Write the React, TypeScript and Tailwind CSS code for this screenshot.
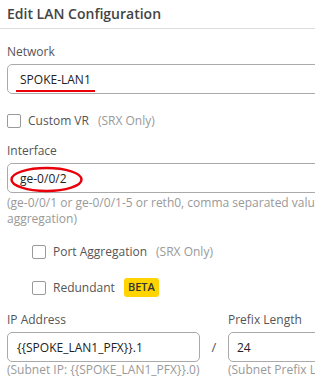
const FONT = "font-['Open_Sans',_'Noto_Sans',_sans-serif]";

function Checkbox() {
  return <span className="block h-[14px] w-[14px] shrink-0 rounded-[2px] border border-[#9a9a9a] bg-white" />;
}

function CheckRow({ label, note, badge, indent }: { label: string; note?: string; badge?: string; indent?: boolean }) {
  return (
    <div className={`flex items-center ${indent ? 'ml-[25px]' : ''}`}>
      <Checkbox />
      <span className="ml-[7px] text-[12px] leading-[16px] text-[#555]">{label}</span>
      {note && <span className="ml-[9px] text-[12px] leading-[16px] text-[#999]">{note}</span>}
      {badge && (
        <span className="ml-[9px] flex h-[19px] w-[35px] items-center justify-center rounded-[3px] bg-[#ffd400] text-[11px] font-semibold text-[#333]">
          {badge}
        </span>
      )}
    </div>
  );
}

export default function App() {
  return (
    <div className={`h-[390px] w-[315px] overflow-hidden bg-white ${FONT}`}>
      <div className="h-[29px] border-b border-[#dcdcdc] px-[7px] pt-[4px]">
        <h2 className="whitespace-nowrap text-[14px] font-semibold leading-[20px] text-[#444]">Edit LAN Configuration</h2>
      </div>

      <div className="w-[420px] pl-[7px]">
        {/* Network */}
        <div className="mt-[15px] text-[12px] leading-[16px] text-[#555]">Network</div>
        <div className="relative mt-[4px] h-[30px] rounded-[5px] border border-[#aaa] pl-[12px] pt-[1px] text-[12px] leading-[28px] text-[#222]">
          SPOKE-LAN1
          <span className="absolute left-[8px] top-[25px] h-[2px] w-[79px] bg-[#e8000b]" />
        </div>

        <div className="mt-[19px]">
          <CheckRow label="Custom VR" note="(SRX Only)" />
        </div>

        {/* Interface */}
        <div className="mt-[14px] text-[12px] leading-[16px] text-[#555]">Interface</div>
        <div className="relative mt-[4px] h-[30px] rounded-[5px] border border-[#aaa] pl-[12px] pt-[1px] text-[12px] leading-[28px] text-[#222]">
          ge-0/0/2
          <svg className="absolute left-[1px] top-[2px]" width="76" height="28" viewBox="0 0 76 28">
            <ellipse cx="37.5" cy="13.5" rx="35" ry="11.5" fill="none" stroke="#e8000b" strokeWidth="2.5" />
          </svg>
        </div>
        <div className="mt-[2px] text-[12px] leading-[16px] text-[#999]">
          <div className="whitespace-nowrap">(ge-0/0/1 or ge-0/0/1-5 or reth0, comma separated values for link</div>
          <div>aggregation)</div>
        </div>

        <div className="mt-[17px]">
          <CheckRow label="Port Aggregation" note="(SRX Only)" indent />
        </div>
        <div className="mt-[18px]">
          <CheckRow label="Redundant" badge="BETA" indent />
        </div>

        {/* IP / Prefix */}
        <div className="mt-[15px] flex">
          <div className="w-[193px] shrink-0">
            <div className="text-[12px] leading-[16px] text-[#555]">IP Address</div>
            <div className="mt-[4px] h-[30px] rounded-[5px] border border-[#aaa] pl-[9px] pt-[1px] text-[12px] leading-[28px] text-[#222]">
              {'{{SPOKE_LAN1_PFX}}.1'}
            </div>
            <div className="whitespace-nowrap text-[12px] leading-[16px] text-[#999]">{'(Subnet IP: {{SPOKE_LAN1_PFX}}.0)'}</div>
          </div>
          <div className="w-[28px] shrink-0 pt-[20px] text-center text-[13px] leading-[30px] text-[#555]">/</div>
          <div className="flex-1">
            <div className="text-[12px] leading-[16px] text-[#555]">Prefix Length</div>
            <div className="mt-[4px] h-[30px] rounded-[5px] border border-[#aaa] pl-[8px] pt-[1px] text-[12px] leading-[28px] text-[#222]">
              24
            </div>
            <div className="whitespace-nowrap text-[12px] leading-[16px] text-[#999]">(Subnet Prefix Length)</div>
          </div>
        </div>
      </div>
    </div>
  );
}
